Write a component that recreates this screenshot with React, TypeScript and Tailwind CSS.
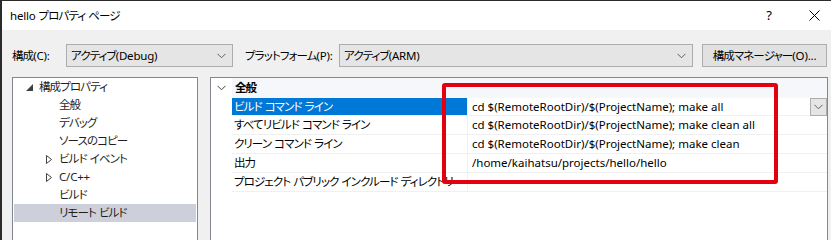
import React from "react";

const font = "font-['Noto_Sans','Noto_Sans_CJK_JP',sans-serif] [font-feature-settings:'palt']";
const jp = "whitespace-pre text-[11.5px]";

function T({ children }: { children: string }) {
  const parts = children.match(/[\x21-\x7e]+| +|[^\x20-\x7e]+/g) ?? [];
  return (
    <>
      {parts.map((s, i) => (
        <span
          key={i}
          className={/^ +$/.test(s) ? "tracking-normal" : /^[\x21-\x7e]+$/.test(s) ? "tracking-[-0.2px]" : "tracking-[-0.9px]"}
        >
          {s}
        </span>
      ))}
    </>
  );
}

function Chevron({ className = "" }: { className?: string }) {
  return (
    <svg width="9" height="6" viewBox="0 0 9 6" className={className}>
      <path d="M0.5 0.8 L4.5 4.8 L8.5 0.8" fill="none" stroke="currentColor" strokeWidth="1" />
    </svg>
  );
}

function Combo({ text, className }: { text: string; className: string }) {
  return (
    <div className={`flex h-[23px] items-center justify-between border border-[#adadad] bg-[#e5e5e5] pl-[4px] pr-[6px] ${className}`}>
      <span className={`${jp} text-black`}>
        <T>{text}</T>
      </span>
      <Chevron className="text-[#606060]" />
    </div>
  );
}

const tree: { label: string; indent: number; mark?: "open" | "closed"; selected?: boolean }[] = [
  { label: "構成プロパティ", indent: 25, mark: "open" },
  { label: "全般", indent: 58 },
  { label: "デバッグ", indent: 58 },
  { label: "ソースのコピー", indent: 58 },
  { label: "ビルド イベント", indent: 45, mark: "closed" },
  { label: "C/C++", indent: 45, mark: "closed" },
  { label: "ビルド", indent: 58 },
  { label: "リモート ビルド", indent: 58, selected: true },
];

const props = [
  { name: "ビルド コマンド ライン", value: "cd $(RemoteRootDir)/$(ProjectName); make all", selected: true },
  { name: "すべてリビルド コマンド ライン", value: "cd $(RemoteRootDir)/$(ProjectName); make clean all" },
  { name: "クリーン コマンド ライン", value: "cd $(RemoteRootDir)/$(ProjectName); make clean" },
  { name: "出力", value: "/home/kaihatsu/projects/hello/hello" },
  { name: "プロジェクト パブリック インクルード ディレクトリ", value: "" },
];

export default function App() {
  return (
    <div className={`h-[240px] w-[831px] overflow-hidden bg-[#2b2b2b] pl-[2px] pt-px ${font}`}>
      <div className="flex h-full flex-col bg-[#f0f0f0]">
        {/* Title bar */}
        <div className="flex h-[29px] shrink-0 items-center bg-white pl-[8px]">
          <span className={`${jp} text-black`}>
            <T>hello プロパティ ページ</T>
          </span>
          <span className="ml-auto mr-[37px] text-[13px] text-black">?</span>
          <svg width="11" height="11" viewBox="0 0 11 11" className="mr-[11px]">
            <path d="M0.5 0.5 L10.5 10.5 M10.5 0.5 L0.5 10.5" stroke="#000" strokeWidth="1" />
          </svg>
        </div>

        {/* Configuration row */}
        <div className="mt-[14px] flex h-[23px] items-center pl-[10px]">
          <span className={`w-[54px] ${jp} text-black`}>
            <T>構成(C):</T>
          </span>
          <Combo text="アクティブ(Debug)" className="w-[167px]" />
          <span className={`ml-[12px] w-[94px] ${jp} text-black`}>
            <T>プラットフォーム(P):</T>
          </span>
          <Combo text="アクティブ(ARM)" className="w-[354px]" />
          <div className={`ml-[9px] flex h-[23px] w-[125px] items-center justify-center border border-[#adadad] bg-[#e1e1e1] ${jp} text-black`}>
            <T>構成マネージャー(O)...</T>
          </div>
        </div>

        {/* Panels */}
        <div className="mt-[10px] flex flex-1 pl-[10px]">
          <div className="w-[186px] border border-b-0 border-[#828790] bg-white">
            {tree.map((t) => (
              <div
                key={t.label}
                className={`flex h-[18px] items-center ${t.selected ? "mx-px bg-[#cdd0da]" : ""}`}
                style={{ paddingLeft: t.selected ? t.indent - 13 : t.indent - 12 }}
              >
                {t.mark === "open" && (
                  <svg width="7" height="7" viewBox="0 0 7 7" className="mr-[6px]">
                    <polygon points="0,7 7,7 7,0" fill="#404040" />
                  </svg>
                )}
                {t.mark === "closed" && (
                  <svg width="6" height="9" viewBox="0 0 6 9" className="mr-[7px]">
                    <polygon points="0.5,0.5 5.5,4.5 0.5,8.5" fill="none" stroke="#404040" strokeWidth="1" />
                  </svg>
                )}
                <span className={`${jp} text-[#1e1e1e]`}>
                  <T>{t.label}</T>
                </span>
              </div>
            ))}
          </div>

          <div className="relative ml-[12px] w-[618px] border border-b-0 border-[#828790] bg-white">
            <div className="flex h-[20px] items-center">
              <div className="flex w-[21px] justify-center">
                <Chevron className="text-[#404040]" />
              </div>
              <div className="flex h-full flex-1 items-center bg-[#f5f7fa] pl-[3px]">
                <span className={`${jp} font-bold text-black`}>
                  <T>全般</T>
                </span>
              </div>
            </div>
            {props.map((p) => (
              <div key={p.name} className={`flex ${p.selected ? "h-[18px]" : "h-[19px]"}`}>
                <div className="w-[21px] shrink-0" />
                <div className="flex flex-1 border-b border-[#f0f0f0]">
                  <div
                    className={`flex w-[236px] shrink-0 items-center overflow-hidden border-r border-[#f0f0f0] pl-[2px] ${jp} ${
                      p.selected ? "bg-[#0078d7] text-white" : "text-black"
                    }`}
                  >
                    <T>{p.name}</T>
                  </div>
                  <div className="flex flex-1 items-center justify-between pl-[4px]">
                    <span className="whitespace-nowrap text-[11.5px] text-black">{p.value}</span>
                    {p.selected && (
                      <div className="flex h-[18px] w-[17px] items-center justify-center border border-[#adadad] bg-[#e5e5e5]">
                        <Chevron className="text-[#606060]" />
                      </div>
                    )}
                  </div>
                </div>
              </div>
            ))}

            {/* Highlight box */}
            <div className="absolute left-[231px] top-[5px] h-[101px] w-[336px] rounded-[3px] border-4 border-[#e3000f]" />
          </div>
        </div>
      </div>
    </div>
  );
}
